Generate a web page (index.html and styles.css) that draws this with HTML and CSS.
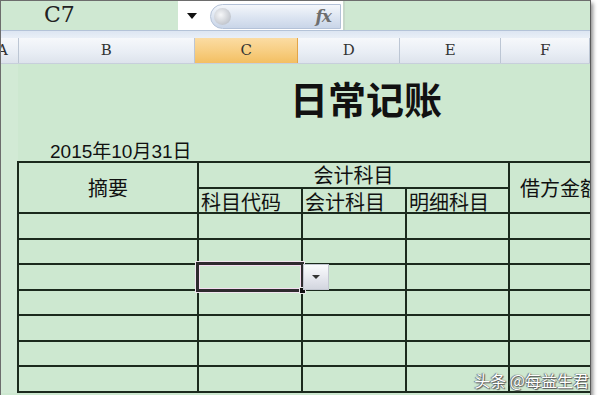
FILE: index.html
```html
<!DOCTYPE html>
<html lang="zh-CN">
<head>
    <meta charset="UTF-8">
    <title>日常记账</title>
    <link rel="stylesheet" href="styles.css">
</head>
<body>

    <div class="frame">
        <!-- Barra de fórmulas -->
        <div class="formula-bar">
            <div class="name-box">C7</div>
            <div class="fx-area">
                <span class="name-arrow"></span>
                <div class="fx-pill">
                    <span class="knob"></span>
                    <span class="fx">fx</span>
                </div>
            </div>
            <div class="formula-input"></div>
        </div>
        <div class="band"></div>

        <!-- Cabeçalho das colunas -->
        <div class="col-heads">
            <div class="col-head col-a"><span>A</span></div>
            <div class="col-head col-b">B</div>
            <div class="col-head col-c active">C</div>
            <div class="col-head col-d">D</div>
            <div class="col-head col-e">E</div>
            <div class="col-head col-f">F</div>
        </div>

        <div class="sheet">
            <div class="title">日常记账</div>
            <div class="date">2015年10月31日</div>

            <table class="ledger">
                <colgroup>
                    <col class="w-b">
                    <col class="w-c">
                    <col class="w-d">
                    <col class="w-e">
                    <col class="w-f">
                </colgroup>
                <tr class="head-1">
                    <th rowspan="2" class="center">摘要</th>
                    <th colspan="3" class="center">会计科目</th>
                    <th rowspan="2" class="center">借方金额</th>
                </tr>
                <tr class="head-2">
                    <th class="sub">科目代码</th>
                    <th class="sub">会计科目</th>
                    <th class="sub">明细科目</th>
                </tr>
                <tr><td></td><td></td><td></td><td></td><td></td></tr>
                <tr><td></td><td></td><td></td><td></td><td></td></tr>
                <tr>
                    <td></td>
                    <td class="active-cell">
                        <div class="selection"></div>
                        <div class="drop-btn"><span></span></div>
                    </td>
                    <td></td><td></td><td></td>
                </tr>
                <tr><td></td><td></td><td></td><td></td><td></td></tr>
                <tr><td></td><td></td><td></td><td></td><td></td></tr>
                <tr><td></td><td></td><td></td><td></td><td></td></tr>
                <tr><td></td><td></td><td></td><td></td><td></td></tr>
            </table>
        </div>

        <div class="watermark">头条 @每益生君</div>
    </div>

</body>
</html>
```

FILE: styles.css
```css
body {
    margin: 0;
    background-color: #fff;
    font-family: "Noto Sans CJK SC", sans-serif;
}

.frame {
    position: relative;
    width: 589px;
    height: 394px;
    border-top: 1px solid #6d6d6d;
    border-left: 1px solid #6d6d6d;
    border-right: 1px solid #5a5a5a;
    background-color: #cde8d0;
    overflow: hidden;
    box-shadow: 2px 3px 4px rgba(0, 0, 0, 0.45);
}

/* Barra de fórmulas */
.formula-bar {
    display: flex;
    height: 29px;
}

.name-box {
    width: 177px;
    padding-left: 43px;
    box-sizing: border-box;
    background-color: #cfe8d2;
    font-family: "DejaVu Serif", serif;
    font-size: 22px;
    line-height: 28px;
    color: #222;
}

.fx-area {
    display: flex;
    align-items: center;
    width: 165px;
    background-color: #fff;
}

.name-arrow {
    width: 0;
    height: 0;
    margin: 0 13px 0 9px;
    border-left: 5px solid transparent;
    border-right: 5px solid transparent;
    border-top: 6px solid #111;
}

.fx-pill {
    position: relative;
    display: flex;
    align-items: center;
    justify-content: flex-end;
    width: 131px;
    height: 25px;
    margin-top: 1px;
    box-sizing: border-box;
    border: 1px solid #b4c2d8;
    border-radius: 14px 0 0 14px;
    background: linear-gradient(#f4f7fb, #dbe4f1 55%, #c9d5e8);
}

.knob {
    position: absolute;
    left: 3px;
    top: 3px;
    width: 17px;
    height: 17px;
    border-radius: 50%;
    background: radial-gradient(circle at 40% 40%, #f6f7f9, #c4c8cf 70%, #b5bac3);
}

.fx {
    font-family: "DejaVu Serif", serif;
    font-style: italic;
    font-weight: bold;
    font-size: 17px;
    color: #6e6e6e;
    margin-right: 9px;
    letter-spacing: -1px;
}

.formula-input {
    flex: 1;
    border-left: 2px solid #c5d8c8;
    background-color: #cfe8d2;
}

.band {
    height: 7px;
    border-top: 1px solid #b4c3d8;
    background: linear-gradient(#dde6f2, #e9eff7);
}

/* Cabeçalho das colunas */
.col-heads {
    display: flex;
    height: 25px;
    border-bottom: 1px solid #c7cfdb;
    background: linear-gradient(#f6f8fb, #e8edf4 60%, #dde3ec);
}

.col-head {
    box-sizing: border-box;
    border-right: 1px solid #bcc6d4;
    font-family: "DejaVu Serif", serif;
    font-size: 15px;
    line-height: 25px;
    text-align: center;
    color: #333;
    overflow: hidden;
}

.col-a { width: 18px; }
.col-a span { margin-left: -14px; }
.col-b { width: 179px; }
.col-c { width: 105px; }
.col-d { width: 103px; }
.col-e { width: 103px; }
.col-f { width: 90px; }

.col-head.active {
    background: linear-gradient(#fbdca3, #f7cd80 55%, #f3bf62);
    border-right-color: #e3a548;
}

/* Planilha */
.sheet {
    display: flex;
    flex-direction: column;
    background: linear-gradient(90deg, #d2ead5 17px, #cde8d0 17px);
}

.title {
    margin-top: 9px;
    padding-left: 289px;
    font-size: 38px;
    font-weight: bold;
    line-height: 50px;
    color: #111;
}

.date {
    margin-top: 18px;
    padding-left: 49px;
    font-family: "Liberation Sans", "Noto Sans CJK SC", sans-serif;
    font-size: 19px;
    line-height: 22px;
    color: #111;
}

.ledger {
    margin-top: -2px;
    margin-left: 16px;
    border-collapse: collapse;
    table-layout: fixed;
    width: 593px;
}

.w-b { width: 180px; }
.w-c { width: 104px; }
.w-d { width: 104px; }
.w-e { width: 103px; }
.w-f { width: 102px; }

.ledger th,
.ledger td {
    border: 2px solid #1b2a1d;
    padding: 0 2px;
    height: 23.5px;
    font-weight: normal;
    font-size: 20px;
    line-height: 20px;
    color: #111;
    white-space: nowrap;
    overflow: visible;
}

.ledger .center {
    text-align: center;
    vertical-align: middle;
}

.ledger .sub {
    text-align: left;
    vertical-align: bottom;
    padding-bottom: 0;
}

.head-1 th {
    height: 24px;
}

.head-2 th {
    height: 23px;
}

/* Célula selecionada */
.active-cell {
    position: relative;
}

.selection {
    position: absolute;
    z-index: 2;
    left: -3px;
    top: -3px;
    right: -3px;
    bottom: -3px;
    border: 3px solid #2e2a2e;
    box-shadow: inset 0 0 0 1px #f3ddef, 0 0 0 1px #f1e4ef;
}

.selection::after {
    content: "";
    position: absolute;
    right: -5px;
    bottom: -5px;
    width: 5px;
    height: 5px;
    background-color: #111;
    border: 1px solid #e6e6e6;
}

.drop-btn {
    position: absolute;
    z-index: 2;
    left: 100%;
    top: -1px;
    width: 26px;
    height: 26px;
    margin-left: 2px;
    box-sizing: border-box;
    border: 1px solid #c3c7d1;
    background: linear-gradient(#fafbfd, #e3e5ec 60%, #d3d6df);
    display: flex;
    align-items: center;
    justify-content: center;
}

.drop-btn span {
    width: 0;
    height: 0;
    border-left: 4px solid transparent;
    border-right: 4px solid transparent;
    border-top: 4px solid #333;
}

.watermark {
    position: absolute;
    right: 1px;
    bottom: 6px;
    font-size: 16px;
    line-height: 18px;
    color: #fff;
    text-shadow: 0 0 1px #444, 1px 1px 1px #555, -1px 0 1px #777;
}
```
